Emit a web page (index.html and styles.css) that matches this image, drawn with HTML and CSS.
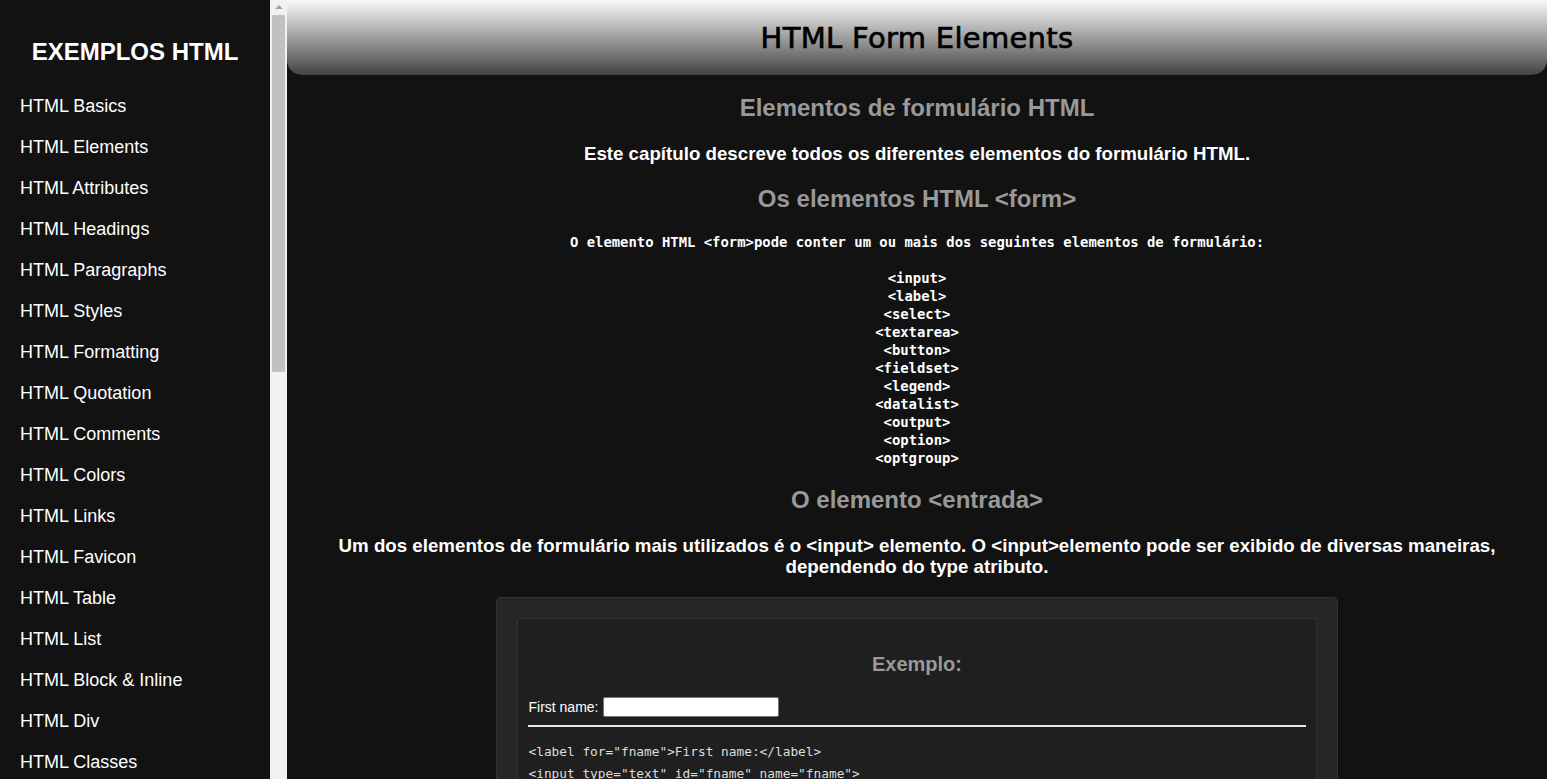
FILE: index.html
```html
<!DOCTYPE html>
<html lang="pt">
<head>
<meta charset="utf-8">
<title>HTML Form Elements</title>
<link rel="stylesheet" href="styles.css">
</head>
<body>
<aside class="sidebar">
  <nav class="side-nav">
    <h1 class="side-title">EXEMPLOS HTML</h1>
    <ul class="side-list">
      <li><a href="#">HTML Basics</a></li>
      <li><a href="#">HTML Elements</a></li>
      <li><a href="#">HTML Attributes</a></li>
      <li><a href="#">HTML Headings</a></li>
      <li><a href="#">HTML Paragraphs</a></li>
      <li><a href="#">HTML Styles</a></li>
      <li><a href="#">HTML Formatting</a></li>
      <li><a href="#">HTML Quotation</a></li>
      <li><a href="#">HTML Comments</a></li>
      <li><a href="#">HTML Colors</a></li>
      <li><a href="#">HTML Links</a></li>
      <li><a href="#">HTML Favicon</a></li>
      <li><a href="#">HTML Table</a></li>
      <li><a href="#">HTML List</a></li>
      <li><a href="#">HTML Block &amp; Inline</a></li>
      <li><a href="#">HTML Div</a></li>
      <li><a href="#">HTML Classes</a></li>
      <li><a href="#">HTML Id</a></li>
      <li><a href="#">HTML Iframes</a></li>
      <li><a href="#">HTML JavaScript</a></li>
    </ul>
  </nav>
  <div class="scrollbar" aria-hidden="true">
    <div class="sb-up"><span class="sb-arrow"></span></div>
    <div class="sb-thumb"></div>
  </div>
</aside>
<main class="main">
  <header class="top">
    <h1 class="top-title">HTML Form Elements</h1>
  </header>
  <section class="content">
    <h2 class="sub first">Elementos de formulário HTML</h2>
    <p class="lead">Este capítulo descreve todos os diferentes elementos do formulário HTML.</p>
    <h2 class="sub">Os elementos HTML &lt;form&gt;</h2>
    <p class="mono">O elemento HTML &lt;form&gt;pode conter um ou mais dos seguintes elementos de formulário:<br><br>&lt;input&gt;<br>&lt;label&gt;<br>&lt;select&gt;<br>&lt;textarea&gt;<br>&lt;button&gt;<br>&lt;fieldset&gt;<br>&lt;legend&gt;<br>&lt;datalist&gt;<br>&lt;output&gt;<br>&lt;option&gt;<br>&lt;optgroup&gt;</p>
    <h2 class="sub">O elemento &lt;entrada&gt;</h2>
    <p class="lead lead-wide">Um dos elementos de formulário mais utilizados é o &lt;input&gt; elemento. O &lt;input&gt;elemento pode ser exibido de diversas maneiras, dependendo do type atributo.</p>
    <div class="example">
      <div class="example-inner">
        <h3 class="ex-title">Exemplo:</h3>
        <form class="ex-form">
          <label for="fname">First name:</label>
          <input class="ex-input" type="text" id="fname" name="fname">
        </form>
        <hr class="ex-rule">
        <pre class="code">&lt;label for="fname"&gt;First name:&lt;/label&gt;
&lt;input type="text" id="fname" name="fname"&gt;
&lt;/form&gt;</pre>
      </div>
    </div>
  </section>
</main>
</body>
</html>
```
FILE: styles.css
```css
html, body {
  margin: 0;
  padding: 0;
  height: 100%;
}
body {
  display: flex;
  height: 100vh;
  overflow: hidden;
  background: #121212;
  font-family: "Liberation Sans", Arial, sans-serif;
  color: #fff;
}
.sidebar {
  flex: 0 0 287px;
  display: flex;
  height: 100vh;
  background: #121212;
}
.side-nav {
  width: 270px;
  height: 100vh;
  overflow: hidden;
}
.side-title {
  margin: 38px 0 0 0;
  text-align: center;
  font-size: 24px;
  line-height: 28px;
  font-weight: bold;
  color: #fff;
}
.side-list {
  list-style: none;
  margin: 20px 0 0 0;
  padding: 0 0 0 20px;
}
.side-list li {
  height: 41px;
  line-height: 41px;
}
.side-list a {
  color: #fff;
  text-decoration: none;
  font-size: 18px;
}
.scrollbar {
  width: 17px;
  height: 100vh;
  background: #f1f1f1;
  display: flex;
  flex-direction: column;
}
.sb-up {
  height: 15px;
  display: flex;
  justify-content: center;
  padding-top: 5px;
  box-sizing: border-box;
}
.sb-arrow {
  width: 0;
  height: 0;
  border-left: 4px solid transparent;
  border-right: 4px solid transparent;
  border-bottom: 4px solid #a3a3a3;
}
.sb-thumb {
  margin: 0 2px;
  height: 357px;
  background: #c1c1c1;
}
.main {
  flex: 1 1 auto;
  min-width: 0;
  height: 100vh;
  overflow: hidden;
  background: #121212;
}
.top {
  height: 75px;
  background: linear-gradient(to bottom, #fafafa 0%, #434343 100%);
  border-radius: 0 0 15px 15px;
  display: flex;
  align-items: center;
  justify-content: center;
}
.top-title {
  margin: 0;
  font-family: "DejaVu Sans", Verdana, sans-serif;
  font-weight: normal;
  font-size: 29px;
  color: #000;
  -webkit-text-stroke: 0.7px #000;
  letter-spacing: 0.3px;
}
.content {
  text-align: center;
}
.sub {
  margin: 0;
  padding: 0 20px;
  color: #999;
  font-size: 24px;
  line-height: 28px;
  font-weight: bold;
}
.sub.first {
  margin-top: 19px;
}
.lead {
  margin: 21px 0;
  padding: 0 20px;
  font-size: 18.72px;
  line-height: 21px;
  font-weight: bold;
  color: #fff;
}
.lead-wide {
  margin-top: 21px;
  margin-bottom: 20px;
}
.mono {
  margin: 20px 0 19px 0;
  padding: 0 20px;
  font-family: "DejaVu Sans Mono", Consolas, monospace;
  font-size: 13.9px;
  line-height: 18px;
  font-weight: bold;
  color: #fff;
}
.example {
  width: 66.75%;
  margin: 0 auto;
  box-sizing: border-box;
  background: #262626;
  border: 1px solid #333;
  border-radius: 5px;
  padding: 20px;
  text-align: left;
}
.example-inner {
  background: #1f1f1f;
  border: 1px solid #333;
  border-radius: 3px;
  padding: 10px 10px 20px 10px;
}
.ex-title {
  margin: 23px 0 21px 0;
  text-align: center;
  color: #999;
  font-size: 20px;
  line-height: 24px;
  font-weight: bold;
}
.ex-form {
  display: flex;
  align-items: center;
  gap: 5px;
  font-size: 14px;
  color: #fff;
}
.ex-input {
  width: 176px;
  height: 20px;
  box-sizing: border-box;
  border: 1px solid #767676;
  border-radius: 2px;
  background: #fff;
  padding: 0;
}
.ex-rule {
  margin: 8px 0 14px 0;
  border: 0;
  height: 2px;
  background: #e8e8e8;
}
.code {
  margin: 0;
  font-family: "DejaVu Sans Mono", Consolas, monospace;
  font-size: 12.8px;
  line-height: 22px;
  color: #ddd;
}
```
